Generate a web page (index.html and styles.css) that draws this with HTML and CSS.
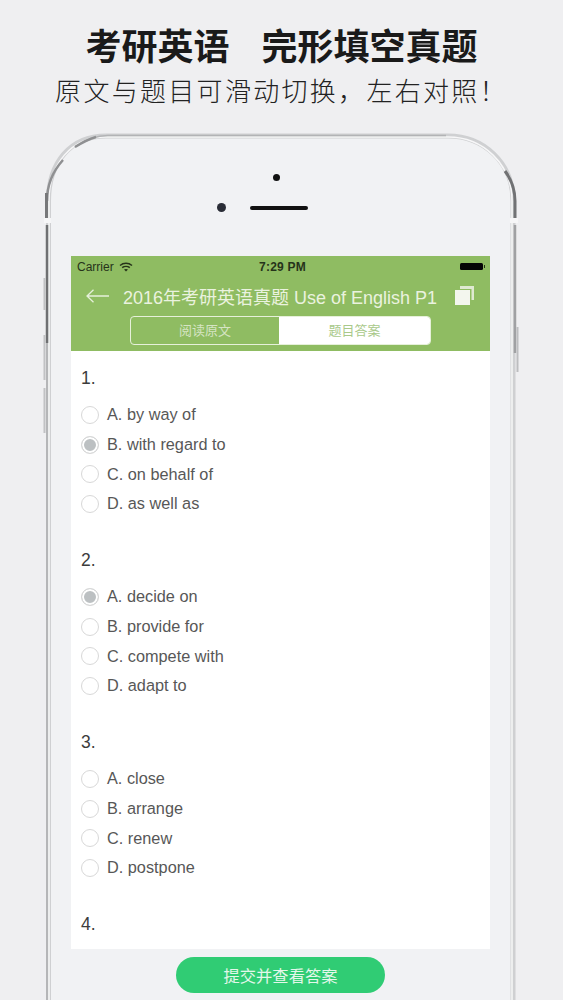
FILE: index.html
```html
<!DOCTYPE html>
<html lang="zh">
<head>
<meta charset="utf-8">
<title>考研英语 完形填空真题</title>
<link rel="stylesheet" href="styles.css">
</head>
<body>
<header class="promo">
  <h1 class="promo-title"><span>考研英语</span><span>完形填空真题</span></h1>
  <p class="promo-sub">原文与题目可滑动切换，左右对照！</p>
</header>
<div class="phone">
  <svg class="frame" width="483" height="867" viewBox="0 0 483 867" fill="none">
    <path d="M8.500 867V68C8.500 30 30 3 66 3H408C444 3 473 30 473 68V867" stroke="#cfd0d2" stroke-width="5"/>
    <path d="M9 867V68C9 31 31 4 66 4H408C443 4 472 31 472 68V867" stroke="#f7f7f8" stroke-width="1.500"/>
    <path d="M7 68C7 52 13 38 23 27" stroke="#8f9092" stroke-width="2.500"/>
    <path d="M35 14C45 7 55 2.500 68 2.500H406" stroke="#b2b3b5" stroke-width="1.500"/>
    <path d="M35 14C43 9 49 6 56 4" stroke="#8f9092" stroke-width="2.500"/>
    <path d="M6.500 86V60" stroke="#77787a" stroke-width="3"/>
    <path d="M7 92V210" stroke="#6f7072" stroke-width="2.500"/>
    <path d="M7 210V867" stroke="#b5b6b8" stroke-width="2"/>
    <path d="M465 38C471 46 475 56 475 68V86" stroke="#717274" stroke-width="3"/>
    <path d="M475 92V220" stroke="#a0a1a3" stroke-width="2.500"/>
    <path d="M4 87.500H11M470 87.500H478" stroke="#f6f6f7" stroke-width="5"/>
    <path d="M4.500 145V177M4.500 202V247M4.500 255V300" stroke="#c1c2c4" stroke-width="2"/>
    <path d="M477.500 194V239" stroke="#bcbdbf" stroke-width="2"/>
  </svg>
  <div class="device">
    <div class="earpiece">
      <span class="sensor"></span>
      <div class="ear-row"><span class="camera"></span><span class="speaker"></span></div>
    </div>
    <main class="screen">
      <div class="appbar">
        <div class="status">
          <span class="carrier">Carrier
            <svg class="wifi" width="14" height="10" viewBox="0 0 14 10" fill="none" stroke="#26331a" stroke-width="1.500">
              <path d="M1 3.500C4.500 .5 9.500 .5 13 3.500M3.200 5.600C5.300 4 8.700 4 10.800 5.600"/>
              <path d="M7 9.500 5 7.400C6.200 6.700 7.800 6.700 9 7.400Z" fill="#26331a" stroke="none"/>
            </svg>
          </span>
          <span class="time">7:29 PM</span>
          <span class="battery"></span>
        </div>
        <div class="nav">
          <svg class="back" width="23" height="14" viewBox="0 0 23 14" fill="none" stroke="#e6f0da" stroke-width="1.300">
            <path d="M23 7H1M7.500 .8 1 7l6.500 6.200"/>
          </svg>
          <span class="nav-title">2016年考研英语真题 Use of English P1</span>
          <svg class="copy" width="20" height="19" viewBox="0 0 20 19">
            <path d="M5 0H19V14H16.500V3H5Z" fill="#dfe9d2"/>
            <rect x="0" y="4" width="15" height="15" fill="#f3f6ee"/>
          </svg>
        </div>
        <div class="segment">
          <span class="seg-item">阅读原文</span>
          <span class="seg-item seg-on">题目答案</span>
        </div>
      </div>
      <section class="question">
        <h2 class="q-num">1.</h2>
        <div class="opt"><i class="radio"></i>A. by way of</div>
        <div class="opt"><i class="radio on"></i>B. with regard to</div>
        <div class="opt"><i class="radio"></i>C. on behalf of</div>
        <div class="opt"><i class="radio"></i>D. as well as</div>
      </section>
      <section class="question">
        <h2 class="q-num">2.</h2>
        <div class="opt"><i class="radio on"></i>A. decide on</div>
        <div class="opt"><i class="radio"></i>B. provide for</div>
        <div class="opt"><i class="radio"></i>C. compete with</div>
        <div class="opt"><i class="radio"></i>D. adapt to</div>
      </section>
      <section class="question">
        <h2 class="q-num">3.</h2>
        <div class="opt"><i class="radio"></i>A. close</div>
        <div class="opt"><i class="radio"></i>B. arrange</div>
        <div class="opt"><i class="radio"></i>C. renew</div>
        <div class="opt"><i class="radio"></i>D. postpone</div>
      </section>
      <section class="question last">
        <h2 class="q-num">4.</h2>
      </section>
    </main>
    <div class="submit-row"><button class="submit">提交并查看答案</button></div>
  </div>
</div>
</body>
</html>
```
FILE: styles.css
```css
* { box-sizing: border-box; }
html, body { margin: 0; height: 1000px; overflow: hidden; }
body {
  background: #efeff1;
  font-family: "Liberation Sans", "Noto Sans CJK SC", sans-serif;
  color: #555;
}
.promo { height: 133px; padding-top: 23px; text-align: center; }
.promo-title {
  margin: 0;
  display: flex;
  justify-content: center;
  gap: 32px;
  font: 700 36px/42px "Noto Sans CJK SC", sans-serif;
  color: #1a1a1a;
}
.promo-sub {
  margin: 6px 0 0;
  font: 300 26px/38px "Noto Sans CJK SC", sans-serif;
  letter-spacing: 2.300px;
  color: #222;
}
.phone { position: relative; height: 867px; padding-top: 3px; }
.frame { position: absolute; left: 40px; top: 0; }
.device {
  margin: 0 49px 0 50px;
  height: 864px;
  padding: 0 24px 0 21px;
  border-radius: 55px 55px 0 0 / 62px 62px 0 0;
  background: #f1f2f4;
}
.earpiece { height: 120px; display: flex; flex-direction: column; align-items: center; padding-top: 38px; }
.sensor { width: 7px; height: 7px; margin-left: -8px; border-radius: 50%; background: #111; }
.ear-row { display: flex; align-items: center; gap: 24px; margin: 22px 0 0 -37px; }
.camera { width: 9px; height: 9px; border-radius: 50%; background: #2a2d36; }
.speaker { width: 58px; height: 4px; border-radius: 2px; background: #111; }
.screen { height: 693px; background: #fff; overflow: hidden; }
.appbar { height: 95px; background: #8fbc62; }
.status {
  height: 21px;
  padding: 0 6px;
  display: grid;
  grid-template-columns: 1fr auto 1fr;
  align-items: center;
  font-size: 12px;
  color: #26331a;
}
.carrier { display: flex; align-items: center; gap: 5px; }
.time { font-weight: 700; margin-left: 4px; letter-spacing: .2px; }
.battery { justify-self: end; position: relative; width: 23px; height: 7px; margin-right: 1px; background: #050505; border-radius: 1.500px; }
.battery::after { content: ""; position: absolute; right: -2px; top: 2px; width: 1.500px; height: 3px; background: #26331a; }
.nav { height: 30px; padding: 8px 0 0 15px; display: flex; align-items: center; }
.nav-title { margin-left: 14px; font-size: 18px; color: #eaf2df; white-space: nowrap; }
.copy { margin: -2px 0 0 18px; flex: none; }
.back { flex: none; }
.segment {
  margin: 9px 0 0 59px;
  width: 301px;
  height: 29px;
  display: flex;
  border: 1px solid #e6f0da;
  border-radius: 4px;
  overflow: hidden;
}
.seg-item { width: 148px; text-align: center; font-size: 13px; line-height: 27px; color: #d5e4c3; }
.seg-on { flex: 1; background: #fff; color: #a9c98a; }
.question { height: 182px; padding: 17px 0 0 10px; }
.q-num { margin: 0 0 11px; font-size: 17.500px; line-height: 21px; font-weight: 400; color: #3c3c3c; }
.opt { height: 29.700px; display: flex; align-items: center; font-size: 16.300px; color: #575757; }
.radio {
  width: 18px;
  height: 18px;
  margin-right: 8px;
  border: 1px solid #d8d8d8;
  border-radius: 50%;
  background: #fff;
  flex: none;
}
.radio.on { background: #bcc0c2; box-shadow: inset 0 0 0 2px #fff; }
.submit-row { display: flex; justify-content: center; padding-top: 8px; }
.submit {
  width: 209px;
  height: 36px;
  border: 0;
  border-radius: 18px;
  background: #30cc74;
  color: #e3f7ea;
  font: 400 16.300px "Noto Sans CJK SC", sans-serif;
}
```
